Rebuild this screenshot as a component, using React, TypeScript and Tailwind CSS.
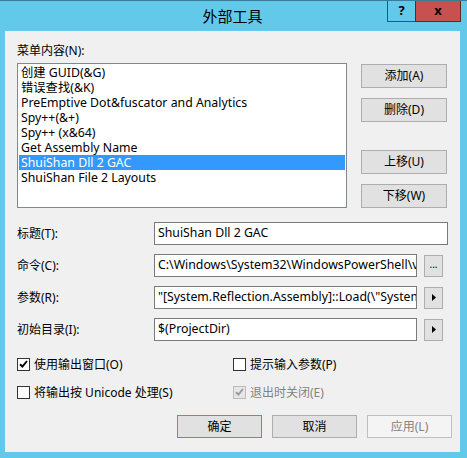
import React from 'react';

const font = "font-['Noto_Sans','Noto_Sans_CJK_SC',sans-serif]";

const WinButton: React.FC<{ label: string; primary?: boolean; disabled?: boolean; className?: string }> = ({
  label,
  primary,
  disabled,
  className = '',
}) => (
  <div
    className={`flex items-center justify-center border text-[12px] ${
      disabled
        ? 'border-[#bfbfbf] bg-[#f4f4f4] text-[#838383]'
        : primary
        ? 'border-[#3399ff] bg-[#e1e1e1] text-black'
        : 'border-[#adadad] bg-[#e1e1e1] text-black'
    } ${className}`}
  >
    {label}
  </div>
);

const Check: React.FC<{ checked?: boolean; disabled?: boolean; label: string }> = ({ checked, disabled, label }) => (
  <div className={`flex items-center gap-[4px] text-[12px] ${disabled ? 'text-[#838383]' : 'text-black'}`}>
    <div
      className={`flex h-[13px] w-[13px] items-center justify-center border ${
        disabled ? 'border-[#bcbcbc] bg-[#e6e6e6]' : 'border-[#333333] bg-white'
      }`}
    >
      {checked && (
        <svg width="9" height="8" viewBox="0 0 9 8">
          <path
            d="M1 4.2 L3.4 6.5 L8 1"
            fill="none"
            stroke={disabled ? '#9a9a9a' : '#000'}
            strokeWidth="1.9"
          />
        </svg>
      )}
    </div>
    <span className="leading-[15px]">{label}</span>
  </div>
);

const Arrow: React.FC = () => (
  <div className="flex h-[22px] w-[19px] items-center justify-center border border-[#adadad] bg-[#e1e1e1]">
    <svg width="4" height="7" viewBox="0 0 4 7">
      <path d="M0 0 L4 3.5 L0 7 Z" fill="#000" />
    </svg>
  </div>
);

const tools = [
  '创建 GUID(&G)',
  '错误查找(&K)',
  'PreEmptive Dot&fuscator and Analytics',
  'Spy++(&+)',
  'Spy++ (x&64)',
  'Get Assembly Name',
  'ShuiShan Dll 2 GAC',
  'ShuiShan File 2 Layouts',
];

const Field: React.FC<{ label: string; value: string; wide?: boolean; extra?: React.ReactNode }> = ({
  label,
  value,
  wide,
  extra,
}) => (
  <div className="flex h-[23px] items-center">
    <div className="w-[137px] text-[12px] leading-[15px]">{label}</div>
    <div
      className={`flex h-[23px] items-center overflow-hidden whitespace-nowrap border border-[#7a7a7a] bg-white pl-[3px] text-[12.3px] ${
        wide ? 'w-[294px]' : 'w-[263px]'
      }`}
    >
      {value}
    </div>
    {extra && <div className="ml-[7px]">{extra}</div>}
  </div>
);

export default function App() {
  return (
    <div className={`relative h-[458px] w-[467px] overflow-hidden border-t border-[#3b7c97] bg-[#62c9ea] ${font} text-black`}>
      {/* title bar */}
      <div className="flex h-[30px] items-center justify-center pr-[2px] text-[15px]">外部工具</div>
      <div className="absolute right-[6px] top-0 flex h-[21px]">
        <div className="flex w-[28px] items-center justify-center border-b border-l border-[#2e5566] text-[13px] font-bold">?</div>
        <div className="flex w-[46px] items-center justify-center border-b border-l border-r border-[#5a2b2b] bg-[#c75050] text-[13px] font-bold">
          x
        </div>
      </div>

      {/* client area */}
      <div className="ml-[5px] h-[421px] w-[455px] bg-[#f0f0f0] pl-[12px]">
        <div className="flex">
          <div className="flex flex-col">
            <div className="pt-[12px] text-[12px] leading-[15px]">菜单内容(N):</div>
            <div className="mt-[5px] h-[145px] w-[330px] border border-[#828790] bg-white p-[1px]">
              {tools.map((t, i) => (
                <div
                  key={t}
                  className={`h-[15px] whitespace-nowrap pl-[2px] text-[12.3px] leading-[15px] ${
                    i === 6 ? 'bg-[#3399ff] text-white' : ''
                  }`}
                >
                  {t}
                </div>
              ))}
            </div>
          </div>
          <div className="ml-[14px] flex flex-col pt-[33px]">
            <WinButton label="添加(A)" className="h-[24px] w-[86px]" />
            <WinButton label="删除(D)" className="mt-[10px] h-[24px] w-[86px]" />
            <WinButton label="上移(U)" className="mt-[28px] h-[24px] w-[86px]" />
            <WinButton label="下移(W)" className="mt-[10px] h-[24px] w-[86px]" />
          </div>
        </div>

        <div className="mt-[14px] flex flex-col gap-[9px]">
          <Field label="标题(T):" value="ShuiShan Dll 2 GAC" wide />
          <Field
            label="命令(C):"
            value={'C:\\Windows\\System32\\WindowsPowerShell\\v1.0\\powershell.exe'}
            extra={
              <div className="flex h-[22px] w-[19px] items-center justify-center border border-[#adadad] bg-[#e1e1e1] pb-[3px] text-[10px]">
                ...
              </div>
            }
          />
          <Field
            label="参数(R):"
            value={'"[System.Reflection.Assembly]::Load(\\"System.EnterpriseServices\\")"'}
            extra={<Arrow />}
          />
          <Field label="初始目录(I):" value="$(ProjectDir)" extra={<Arrow />} />
        </div>

        <div className="mt-[15px] flex h-[16px] items-center">
          <div className="w-[216px]">
            <Check checked label="使用输出窗口(O)" />
          </div>
          <Check label="提示输入参数(P)" />
        </div>
        <div className="mt-[12px] flex h-[16px] items-center">
          <div className="w-[216px]">
            <Check label="将输出按 Unicode 处理(S)" />
          </div>
          <Check checked disabled label="退出时关闭(E)" />
        </div>

        <div className="mt-[15px] flex justify-end gap-[10px] pr-[8px]">
          <WinButton label="确定" primary className="h-[23px] w-[85px]" />
          <WinButton label="取消" className="h-[23px] w-[85px]" />
          <WinButton label="应用(L)" disabled className="h-[23px] w-[85px]" />
        </div>
      </div>
    </div>
  );
}
